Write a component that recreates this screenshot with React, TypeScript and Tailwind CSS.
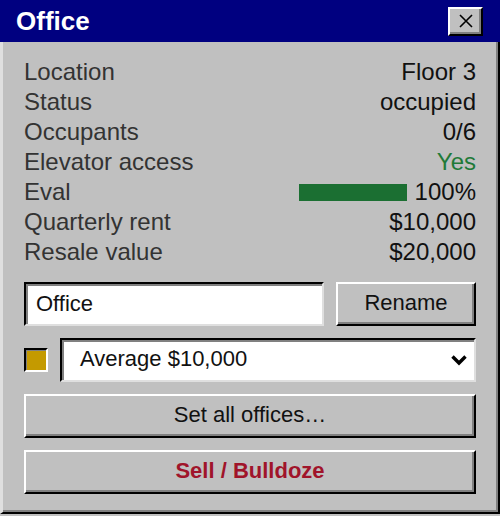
import React from "react";

const rows: { label: string; value: React.ReactNode }[] = [
  { label: "Location", value: "Floor 3" },
  { label: "Status", value: "occupied" },
  { label: "Occupants", value: "0/6" },
  { label: "Elevator access", value: <span className="text-[#1f7a38]">Yes</span> },
  {
    label: "Eval",
    value: (
      <span className="flex items-center gap-[8px]">
        <span className="block w-[108px] h-[17px] bg-[#1b6f32]" />
        <span>100%</span>
      </span>
    ),
  },
  { label: "Quarterly rent", value: "$10,000" },
  { label: "Resale value", value: "$20,000" },
];

const raised =
  "bg-[#c0c0c0] border-t-2 border-l-2 border-t-white border-l-white border-r-2 border-b-2 border-r-black border-b-black shadow-[inset_-2px_-2px_0_#808080]";
const sunken =
  "bg-white border-t-2 border-l-2 border-t-black border-l-black border-r-2 border-b-2 border-r-[#dfdfdf] border-b-[#dfdfdf] shadow-[inset_2px_2px_0_#808080]";

export default function App() {
  return (
    <div
      className="w-[500px] h-[516px] bg-[#c0c0c0] text-[22px] text-[#111]"
      style={{ fontFamily: '"Liberation Sans", Arial, sans-serif' }}
    >
      <div className="w-[500px] h-[514px] flex flex-col">
        <div className="h-[42px] bg-[#000080] flex items-center justify-between pl-[16px] pr-[17px]">
          <span className="text-white font-bold text-[26px] leading-none">Office</span>
          <div className={`${raised} w-[35px] h-[29px] flex items-center justify-center`}>
            <svg width="14" height="14" viewBox="0 0 14 14">
              <path d="M1 1 L13 13 M13 1 L1 13" stroke="#000" strokeWidth="1.6" />
            </svg>
          </div>
        </div>
        <div className="flex-1 flex flex-col border-l-[3px] border-l-[#dfdfdf] border-r-2 border-b-2 border-r-black border-b-black shadow-[inset_-2px_-2px_0_#808080] pl-[21px] pr-[22px] pt-[15px]">
          <div className="flex flex-col text-[24px]">
            {rows.map((r) => (
              <div key={r.label} className="h-[30px] flex items-center justify-between">
                <span className="text-[#333]">{r.label}</span>
                <span className="text-[#111]">{r.value}</span>
              </div>
            ))}
          </div>
          <div className="mt-[15px] flex gap-[12px] h-[44px]">
            <div className={`${sunken} w-[300px] flex items-center pl-[10px] pb-[2px]`}>Office</div>
            <div className={`${raised} flex-1 flex items-center justify-center pb-[3px]`}>Rename</div>
          </div>
          <div className="mt-[12px] flex items-center gap-[12px] h-[44px]">
            <div className="w-[24px] h-[24px] border-t-2 border-l-2 border-t-black border-l-black border-r-2 border-b-2 border-r-white border-b-white bg-[#c49a00] shadow-[inset_1px_1px_0_#808080]" />
            <div className={`${sunken} flex-1 h-[44px] flex items-center justify-between pl-[18px] pr-[6px] pb-[3px]`}>
              <span>Average $10,000</span>
              <svg width="18" height="12" viewBox="0 0 18 12" className="mt-[3px]">
                <path d="M2.5 2.5 L9 9 L15.5 2.5" stroke="#000" strokeWidth="3.4" fill="none" />
              </svg>
            </div>
          </div>
          <div className={`${raised} mt-[12px] h-[44px] flex items-center justify-center pb-[3px]`}>
            Set all offices…
          </div>
          <div className={`${raised} mt-[12px] h-[44px] flex items-center justify-center font-bold text-[#a0142a] pb-[3px]`}>
            Sell / Bulldoze
          </div>
        </div>
      </div>
    </div>
  );
}
